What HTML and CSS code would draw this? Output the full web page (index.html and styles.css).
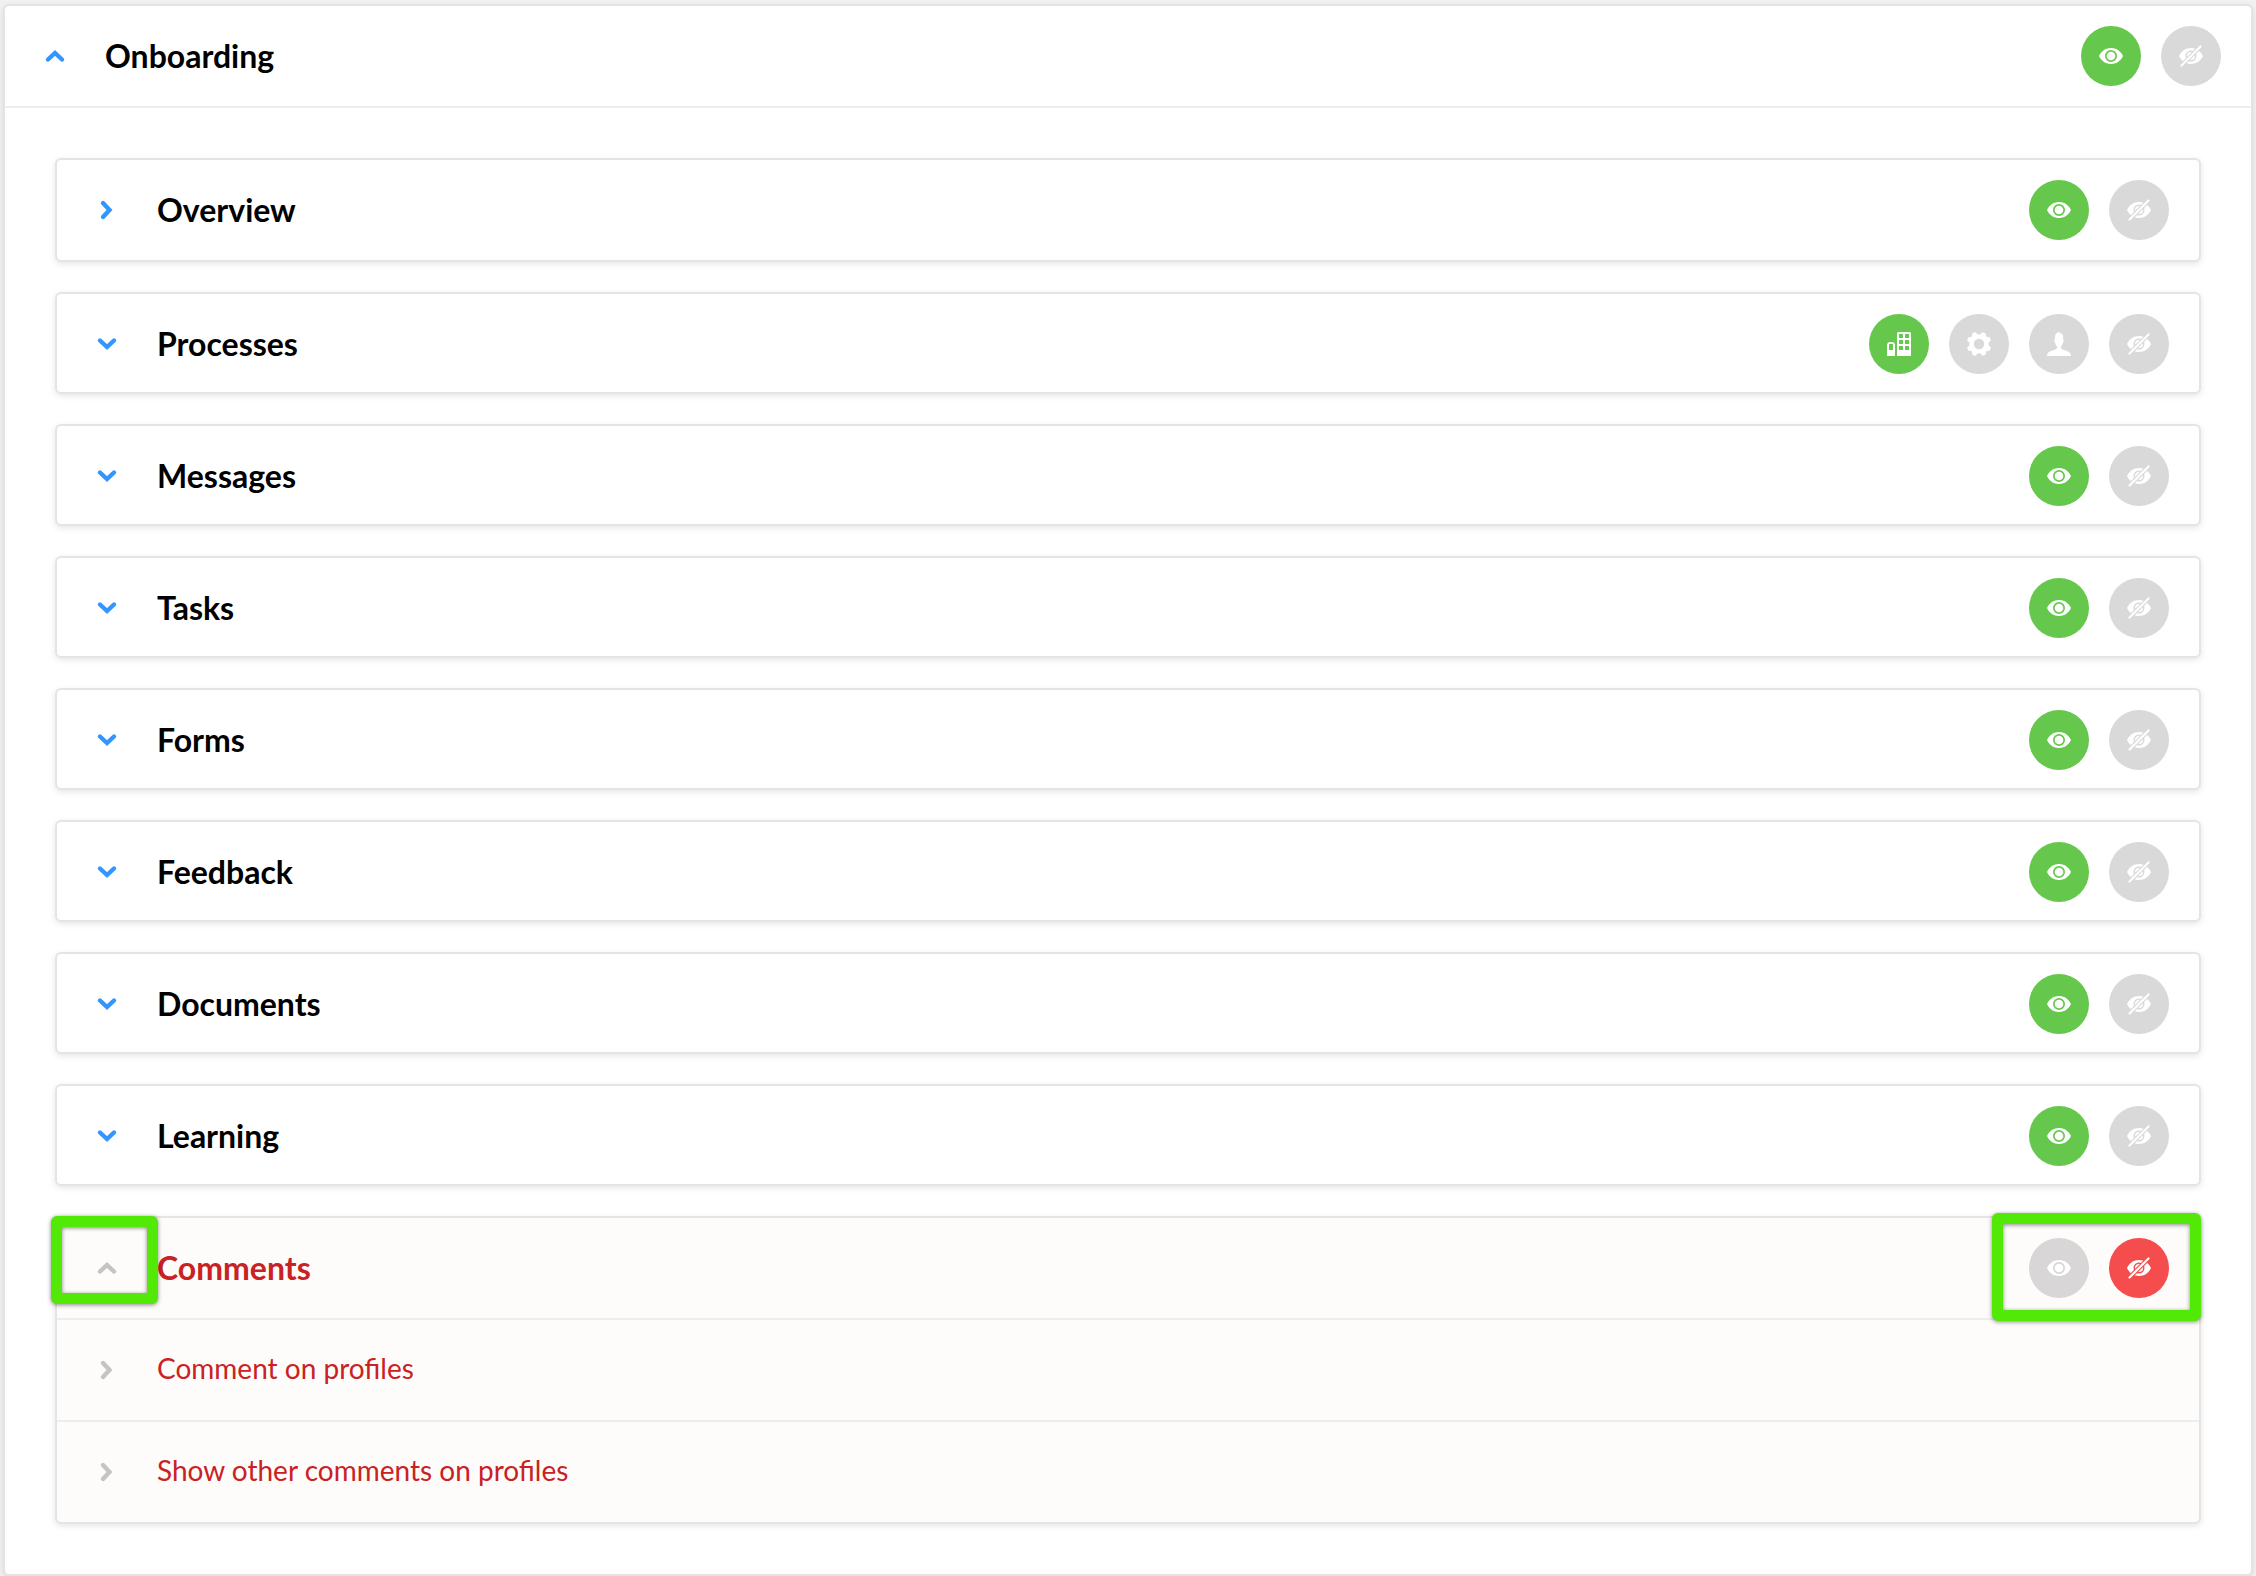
FILE: index.html
```
<!DOCTYPE html>
<html lang="en">
<head>
<meta charset="utf-8">
<meta name="viewport" content="width=device-width, initial-scale=1">
<title>Onboarding permissions</title>
<link rel="stylesheet" href="styles.css">
</head>
<body>
<svg class="sprite" aria-hidden="true">
  <symbol id="up" viewBox="0 0 24 24"><path d="M5 15.500 12 9l7 6.500" fill="none" stroke="currentColor" stroke-width="4.400" stroke-linecap="round"/></symbol>
  <symbol id="down" viewBox="0 0 24 24"><path d="M5 8.500 12 15l7-6.500" fill="none" stroke="currentColor" stroke-width="4.400" stroke-linecap="round"/></symbol>
  <symbol id="right" viewBox="0 0 24 24"><path d="M8 5l6.500 7L8 19" fill="none" stroke="currentColor" stroke-width="4.400" stroke-linecap="round"/></symbol>
  <symbol id="eye" viewBox="0 0 24 24">
    <path fill="currentColor" fill-rule="evenodd" d="M12 4C5.500 4 1.500 8.500 0 12c1.500 3.500 5.500 8 12 8s10.500-4.500 12-8C22.500 8.500 18.500 4 12 4Zm0 2a6 6 0 1 0 0 12 6 6 0 0 0 0-12Z"/>
    <circle cx="12" cy="12" r="4.300" fill="currentColor"/>
  </symbol>
  <symbol id="hidden" viewBox="0 0 24 24">
    <path fill="currentColor" fill-rule="evenodd" d="M12 4C5.500 4 1.500 8.500 0 12c1.500 3.500 5.500 8 12 8s10.500-4.500 12-8C22.500 8.500 18.500 4 12 4Zm0 2.500a5.500 5.500 0 1 0 0 11 5.500 5.500 0 0 0 0-11Z"/>
    <circle cx="12" cy="12" r="4" fill="currentColor"/>
    <path class="cut" d="M2.500 21.500 21.500 2.500" stroke-width="4.500"/>
    <path d="M2.500 21.500 21.500 2.500" stroke="currentColor" stroke-width="2.200" stroke-linecap="round"/>
  </symbol>
  <symbol id="company" viewBox="0 0 24 24"><path fill="currentColor" fill-rule="evenodd" d="M0 24V12l2-2h4l2 2v12Zm2-12v6h4v-6ZM10 24V1l1-1h12l1 1v23Zm2-22v4h4V2Zm6 0v4h4V2Zm-6 6v4h4V8Zm6 0v4h4V8Zm-6 6v4h4v-4Zm6 0v4h4v-4Z"/></symbol>
  <symbol id="gear" viewBox="0 0 24 24"><path fill="currentColor" fill-rule="evenodd" d="M7 .5 8.500 .3Q12 5 15.500 .3L17 .5 19 1.700Q18.200 5.800 22.300 5L23.500 7 23.700 8.500Q19 12 23.700 15.500L23.500 17 22.300 19Q18.200 18.200 19 22.300L17 23.500 15.500 23.700Q12 19 8.500 23.700L7 23.500 5 22.300Q5.800 18.200 1.700 19L.5 17 .3 15.500Q5 12 .3 8.500L.5 7 1.700 5Q5.800 5.800 5 1.700ZM12 6.800a5.200 5.200 0 1 0 0 10.400 5.200 5.200 0 0 0 0-10.400Z"/></symbol>
  <symbol id="person" viewBox="0 0 24 24"><path fill="currentColor" d="M12.500 0c-3 .5-4.500 2-4.500 5v2c-1 0-1 3 .5 4.500.3 1.500 1 2.500 1.500 3v1.500c-1 2-4 2-7 3.500-2 1-3 2-3 4.500h24c0-2.500-1-3.500-3-4.500-3-1.500-6-1.500-7-3.500v-1.500c.5-.5 1.200-1.500 1.500-3C17 10 17 7 16 7V4c0-1.500-1-2.500-2.500-2.500Z"/></symbol>
</svg>

<main class="panel">
  <header class="head">
    <button class="toggle" type="button" aria-expanded="true" aria-label="Collapse Onboarding"><svg><use href="#up"/></svg></button>
    <h1 class="title">Onboarding</h1>
    <div class="actions">
      <button class="dot on" type="button" aria-label="Show"><svg><use href="#eye"/></svg></button>
      <button class="dot" type="button" aria-label="Hide"><svg><use href="#hidden"/></svg></button>
    </div>
  </header>

  <div class="cards">
    <section class="card">
      <div class="head">
        <button class="toggle" type="button" aria-label="Open Overview"><svg><use href="#right"/></svg></button>
        <h2 class="title">Overview</h2>
        <div class="actions">
          <button class="dot on" type="button" aria-label="Show"><svg><use href="#eye"/></svg></button>
          <button class="dot" type="button" aria-label="Hide"><svg><use href="#hidden"/></svg></button>
        </div>
      </div>
    </section>

    <section class="card">
      <div class="head folded">
        <button class="toggle" type="button" aria-expanded="false" aria-label="Expand Processes"><svg><use href="#down"/></svg></button>
        <h2 class="title">Processes</h2>
        <div class="actions">
          <button class="dot on" type="button" aria-label="Company"><svg><use href="#company"/></svg></button>
          <button class="dot" type="button" aria-label="Settings"><svg><use href="#gear"/></svg></button>
          <button class="dot" type="button" aria-label="Person"><svg><use href="#person"/></svg></button>
          <button class="dot" type="button" aria-label="Hide"><svg><use href="#hidden"/></svg></button>
        </div>
      </div>
    </section>

    <section class="card">
      <div class="head folded">
        <button class="toggle" type="button" aria-expanded="false" aria-label="Expand Messages"><svg><use href="#down"/></svg></button>
        <h2 class="title">Messages</h2>
        <div class="actions">
          <button class="dot on" type="button" aria-label="Show"><svg><use href="#eye"/></svg></button>
          <button class="dot" type="button" aria-label="Hide"><svg><use href="#hidden"/></svg></button>
        </div>
      </div>
    </section>

    <section class="card">
      <div class="head folded">
        <button class="toggle" type="button" aria-expanded="false" aria-label="Expand Tasks"><svg><use href="#down"/></svg></button>
        <h2 class="title">Tasks</h2>
        <div class="actions">
          <button class="dot on" type="button" aria-label="Show"><svg><use href="#eye"/></svg></button>
          <button class="dot" type="button" aria-label="Hide"><svg><use href="#hidden"/></svg></button>
        </div>
      </div>
    </section>

    <section class="card">
      <div class="head folded">
        <button class="toggle" type="button" aria-expanded="false" aria-label="Expand Forms"><svg><use href="#down"/></svg></button>
        <h2 class="title">Forms</h2>
        <div class="actions">
          <button class="dot on" type="button" aria-label="Show"><svg><use href="#eye"/></svg></button>
          <button class="dot" type="button" aria-label="Hide"><svg><use href="#hidden"/></svg></button>
        </div>
      </div>
    </section>

    <section class="card">
      <div class="head folded">
        <button class="toggle" type="button" aria-expanded="false" aria-label="Expand Feedback"><svg><use href="#down"/></svg></button>
        <h2 class="title">Feedback</h2>
        <div class="actions">
          <button class="dot on" type="button" aria-label="Show"><svg><use href="#eye"/></svg></button>
          <button class="dot" type="button" aria-label="Hide"><svg><use href="#hidden"/></svg></button>
        </div>
      </div>
    </section>

    <section class="card">
      <div class="head folded">
        <button class="toggle" type="button" aria-expanded="false" aria-label="Expand Documents"><svg><use href="#down"/></svg></button>
        <h2 class="title">Documents</h2>
        <div class="actions">
          <button class="dot on" type="button" aria-label="Show"><svg><use href="#eye"/></svg></button>
          <button class="dot" type="button" aria-label="Hide"><svg><use href="#hidden"/></svg></button>
        </div>
      </div>
    </section>

    <section class="card">
      <div class="head folded">
        <button class="toggle" type="button" aria-expanded="false" aria-label="Expand Learning"><svg><use href="#down"/></svg></button>
        <h2 class="title">Learning</h2>
        <div class="actions">
          <button class="dot on" type="button" aria-label="Show"><svg><use href="#eye"/></svg></button>
          <button class="dot" type="button" aria-label="Hide"><svg><use href="#hidden"/></svg></button>
        </div>
      </div>
    </section>

    <section class="card denied">
      <div class="head">
        <button class="toggle" type="button" aria-expanded="true" aria-label="Collapse Comments"><svg><use href="#up"/></svg></button>
        <h2 class="title">Comments</h2>
        <div class="actions">
          <button class="dot" type="button" aria-label="Show"><svg><use href="#eye"/></svg></button>
          <button class="dot off" type="button" aria-label="Hide"><svg><use href="#hidden"/></svg></button>
        </div>
      </div>
      <div class="row">
        <button class="toggle" type="button" aria-label="Open Comment on profiles"><svg><use href="#right"/></svg></button>
        <h3 class="subtitle">Comment on profiles</h3>
      </div>
      <div class="row">
        <button class="toggle" type="button" aria-label="Open Show other comments on profiles"><svg><use href="#right"/></svg></button>
        <h3 class="subtitle">Show other comments on profiles</h3>
      </div>
      <div class="mark mark-toggle"></div>
      <div class="mark mark-actions"></div>
    </section>
  </div>
</main>
</body>
</html>
```
FILE: styles.css
```
* { box-sizing: border-box; }

body {
  margin: 0;
  padding: 4px 3px 0;
  background: #f2f2f2;
  color: #000;
  font-family: Lato, "Open Sans", sans-serif;
}

.sprite { position: absolute; width: 0; height: 0; }

.panel,
.card {
  border: 2px solid #e4e4e4;
  border-radius: 6px;
  background: #fff;
  box-shadow: 0 2px 6px rgba(0, 0, 0, .1);
}

.head,
.row {
  display: flex;
  align-items: center;
  gap: 30px;
  min-height: 100px;
  padding: 20px 30px;
}

.folded {
  min-height: 98px;
  padding-bottom: 18px;
}

.panel > .head,
.denied > .head,
.row:not(:nth-child(3)) { border-bottom: 2px solid #ededed; }

.title {
  flex: 1;
  margin: 0;
  font-size: 32px;
  line-height: 40px;
  font-weight: 700;
}

.subtitle {
  margin: 0;
  padding-bottom: 4px;
  font-size: 28px;
  line-height: 56px;
  font-weight: 400;
}

.toggle {
  display: grid;
  place-items: center;
  width: 40px;
  height: 40px;
  padding: 0;
  border: 0;
  background: none;
  color: #3396ff;
}

.toggle svg { display: block; width: 24px; height: 24px; }

.actions { display: flex; gap: 20px; }

.dot {
  --fill: #d9d9d9;
  display: grid;
  place-items: center;
  width: 60px;
  height: 60px;
  padding: 0;
  border: 0;
  border-radius: 50%;
  background: var(--fill);
  color: #fff;
}

.dot svg { display: block; width: 24px; height: 24px; overflow: visible; }
.dot.on { --fill: #65c84c; }
.dot.off { --fill: #f54d4d; }

.cut { stroke: var(--fill); }

.cards {
  display: flex;
  flex-direction: column;
  gap: 30px;
  padding: 50px;
}

.denied {
  position: relative;
  background: #fefcfb;
  color: #c92222;
}

.denied .toggle { color: #c4c4c4; }
.denied .dot:not(.off) { --fill: #d8d6d7; }

/* Highlight frames laid over the controls */
.mark {
  position: absolute;
  border: 11px solid #52e906;
  border-radius: 6px;
  filter: drop-shadow(0 1px 2px rgba(0, 0, 0, .45));
  pointer-events: none;
}

.mark-toggle { left: -6px; top: -2px; width: 107px; height: 88px; }
.mark-actions { right: -2px; top: -5px; width: 209px; height: 108px; }
```
